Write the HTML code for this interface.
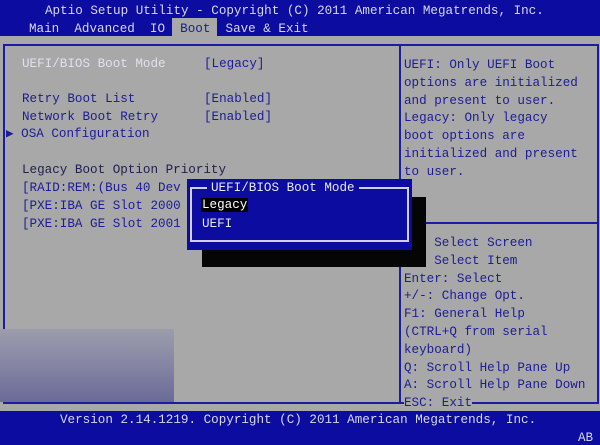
<!DOCTYPE html>
<html><head><style>
*{margin:0;padding:0}
body{width:600px;height:445px;background:#a8a8a8;position:relative;overflow:hidden;font-family:"Liberation Mono",monospace;font-size:12.6px;color:#1c1c96}
.t{position:absolute;white-space:pre;line-height:14px}
.w{color:#d8d8e8}
</style></head><body>
<div style="position:absolute;left:0;top:0;width:600px;height:36px;background:#0c0ca0"></div>
<div class="t w" style="left:45px;top:4px">Aptio Setup Utility - Copyright (C) 2011 American Megatrends, Inc.</div>
<div style="position:absolute;left:172px;top:18px;width:45px;height:18px;background:#a8a8a8"></div>
<div class="t w" style="left:29px;top:22px">Main  Advanced  IO  <span style="color:#1c1c96">Boot</span>  Save &amp; Exit</div>
<div style="position:absolute;left:3px;top:44px;width:592px;height:356px;border:2px solid #1c1ca0"></div>
<div style="position:absolute;left:399px;top:44px;width:2px;height:360px;background:#1c1ca0"></div>
<div style="position:absolute;left:401px;top:222px;width:196px;height:2px;background:#1c1ca0"></div>
<div class="t" style="left:22px;top:57px;color:#e0e0f0">UEFI/BIOS Boot Mode</div>
<div class="t" style="left:204px;top:57px">[Legacy]</div>
<div class="t" style="left:22px;top:92px">Retry Boot List</div>
<div class="t" style="left:204px;top:92px">[Enabled]</div>
<div class="t" style="left:22px;top:110px">Network Boot Retry</div>
<div class="t" style="left:204px;top:110px">[Enabled]</div>
<div class="t" style="left:6px;top:127px">▶ OSA Configuration</div>
<div class="t" style="left:22px;top:163px;color:#202050">Legacy Boot Option Priority</div>
<div class="t" style="left:22px;top:181px">[RAID:REM:(Bus 40 Dev</div>
<div class="t" style="left:22px;top:199px">[PXE:IBA GE Slot 2000</div>
<div class="t" style="left:22px;top:217px">[PXE:IBA GE Slot 2001</div>
<div class="t" style="left:404px;top:57px;line-height:17.8px">UEFI: Only UEFI Boot
options are initialized
and present to user.
Legacy: Only legacy
boot options are
initialized and present
to user.</div>
<div class="t" style="left:404px;top:235px;line-height:17.8px">    Select Screen
    Select Item
Enter: Select
+/-: Change Opt.
F1: General Help
(CTRL+Q from serial
keyboard)
Q: Scroll Help Pane Up
A: Scroll Help Pane Down
<span style="background:#a8a8a8">ESC: Exit</span></div>
<div style="position:absolute;left:0;top:329px;width:174px;height:73px;background:linear-gradient(#9c9cac,#8a8aa6 40%,#6a6a98)"></div>
<div style="position:absolute;left:202px;top:197px;width:224px;height:70px;background:#050505"></div>
<div style="position:absolute;left:187px;top:179px;width:225px;height:71px;background:#0c0ca0"></div>
<div style="position:absolute;left:190px;top:187px;width:215px;height:51px;border:2px solid #d0d0e0"></div>
<div class="t" style="left:207px;top:181px;background:#0c0ca0;padding:0 4px;color:#e8e8f0">UEFI/BIOS Boot Mode</div>
<div class="t" style="left:201px;top:198px;background:#000;color:#fff;padding:0 1px">Legacy</div>
<div class="t" style="left:202px;top:217px;color:#e8e8f0">UEFI</div>
<div style="position:absolute;left:0;top:411px;width:600px;height:34px;background:#0c0ca0"></div>
<div class="t w" style="left:60px;top:413px">Version 2.14.1219. Copyright (C) 2011 American Megatrends, Inc.</div>
<div class="t w" style="left:578px;top:431px">AB</div>
</body></html>
